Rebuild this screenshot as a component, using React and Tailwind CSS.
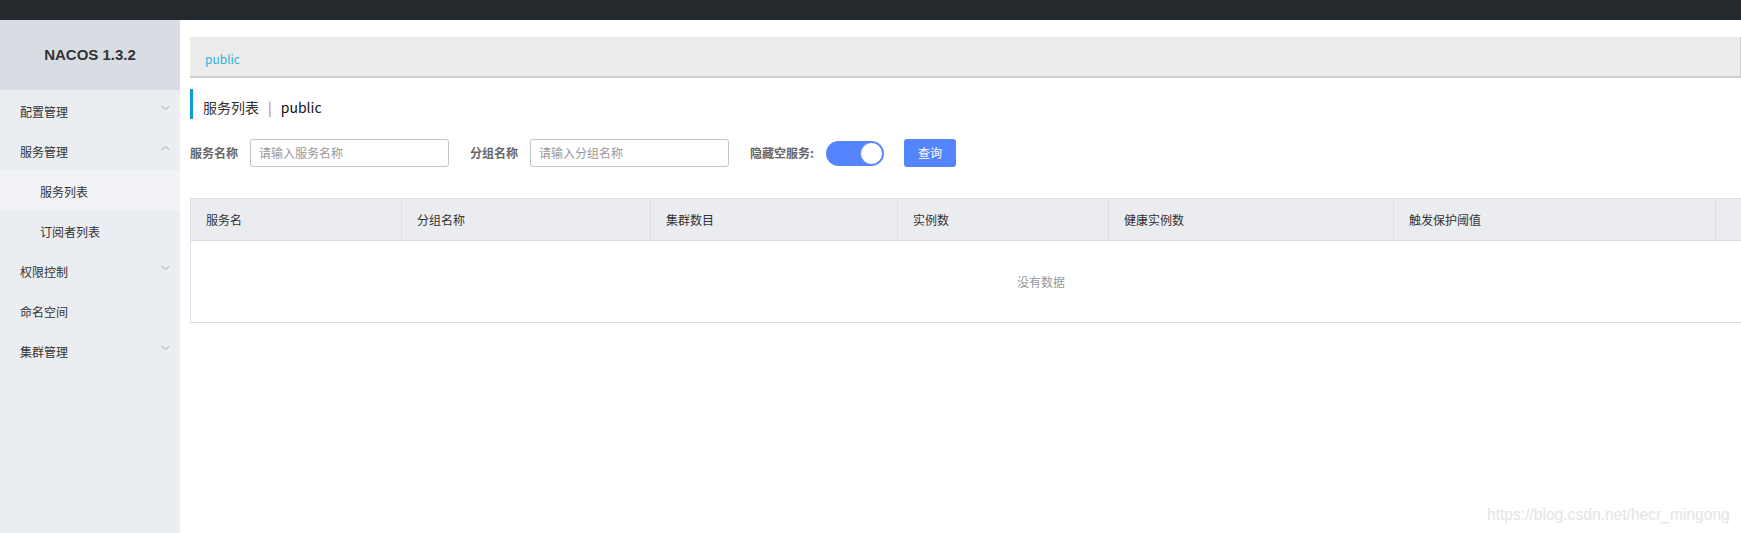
import React from 'react';

const cjk = { fontFamily: '"Noto Sans CJK SC", "Liberation Sans", sans-serif' };

// sidebar menu
const menu = [
  { label: '配置管理', arrow: 'down' },
  { label: '服务管理', arrow: 'up' },
  { label: '服务列表', sub: true, active: true },
  { label: '订阅者列表', sub: true },
  { label: '权限控制', arrow: 'down' },
  { label: '命名空间' },
  { label: '集群管理', arrow: 'down' },
];

const columns = [
  { title: '服务名', w: 'w-[211px]' },
  { title: '分组名称', w: 'w-[249px]' },
  { title: '集群数目', w: 'w-[247px]' },
  { title: '实例数', w: 'w-[211px]' },
  { title: '健康实例数', w: 'w-[285px]' },
  { title: '触发保护阈值', w: 'w-[322px]' },
  { title: '操作', w: 'w-[177px]' },
];

const Chevron = ({ dir }) => (
  <svg width="9" height="6" viewBox="0 0 9 6" className="text-[#a3a7b0]">
    {dir === 'down' ? (
      <path d="M0.5 0.8 L4.5 4.8 L8.5 0.8" fill="none" stroke="currentColor" strokeWidth="1" />
    ) : (
      <path d="M0.5 5.2 L4.5 1.2 L8.5 5.2" fill="none" stroke="currentColor" strokeWidth="1" />
    )}
  </svg>
);

const Sidebar = () => (
  <div className="w-[180px] shrink-0 bg-[#eaedf1] flex flex-col">
    <div className="h-[70px] bg-[#d8dde4] flex items-center justify-center">
      <span className="text-[15px] font-bold text-[#333]" style={{ fontFamily: '"Liberation Sans", sans-serif' }}>
        NACOS 1.3.2
      </span>
    </div>
    {menu.map((m) => (
      <div
        key={m.label}
        className={`h-[40px] flex items-center justify-between pr-[10px] text-[12px] text-[#333] ${
          m.sub ? 'pl-[40px]' : 'pl-[20px]'
        } ${m.active ? 'bg-[#f2f3f7]' : ''}`}
      >
        <span className="pt-[4px]">{m.label}</span>
        {m.arrow && (
          <span className="-mt-[4px]">
            <Chevron dir={m.arrow} />
          </span>
        )}
      </div>
    ))}
  </div>
);

const SearchBar = () => (
  <div className="mt-[20px] flex items-center h-[28px] text-[12px]">
    <span className="font-bold text-[#666] mr-[12px]">服务名称</span>
    <div className="w-[199px] h-[28px] border border-[#c4c6cf] rounded-[3px] flex items-center px-[8px] text-[#999] mr-[21px]">
      请输入服务名称
    </div>
    <span className="font-bold text-[#666] mr-[12px]">分组名称</span>
    <div className="w-[199px] h-[28px] border border-[#c4c6cf] rounded-[3px] flex items-center px-[8px] text-[#999] mr-[21px]">
      请输入分组名称
    </div>
    <span className="font-bold text-[#666] mr-[12px]">隐藏空服务:</span>
    <div className="w-[58px] h-[25px] rounded-full bg-[#5584ff] flex items-center justify-end pr-[1px] mr-[20px]">
      <div className="w-[23px] h-[23px] rounded-full bg-white border border-[#5584ff]" />
    </div>
    <button className="w-[52px] h-[28px] rounded-[3px] bg-[#5584ff] text-white text-[12px]">查询</button>
  </div>
);

const Table = () => (
  <div className="mt-[31px] w-[1702px] border border-[#dcdee3]">
    <div className="flex h-[42px] bg-[#ebecf0] border-b border-[#dcdee3]">
      {columns.map((c, i) => (
        <div
          key={c.title}
          className={`${c.w} shrink-0 flex items-center pl-[15px] text-[12px] text-[#333] ${
            i < columns.length - 1 ? 'border-r border-[#dcdee3]' : ''
          }`}
        >
          {i < columns.length - 1 ? c.title : ''}
        </div>
      ))}
    </div>
    <div className="h-[81px] flex items-center justify-center text-[12px] text-[#999]">没有数据</div>
  </div>
);

export default function App() {
  return (
    <div className="relative w-[1741px] h-[533px] overflow-hidden bg-white flex flex-col" style={cjk}>
      <div className="h-[20px] shrink-0 bg-[#252a2f]" />
      <div className="flex flex-1 min-h-0">
        <Sidebar />
        <div className="flex-1 pl-[10px] pt-[17px] min-w-0">
          <div className="h-[41px] bg-[#ececec] border-b-2 border-r border-[#cfcfcf] flex items-center pl-[15px] pt-[4px]">
            <span className="text-[12px] text-[#2fb3d9]">public</span>
          </div>
          <div className="mt-[11px] h-[30px] border-l-[3px] border-[#0e9ad8] flex items-center pl-[10px] pt-[7px] text-[14px]">
            <span className="text-[#333]">服务列表</span>
            <span className="mx-[9px] text-[#c27a30]">|</span>
            <span className="text-[#111]">public</span>
          </div>
          <SearchBar />
          <Table />
        </div>
      </div>
      <div
        className="absolute left-[1487px] top-[503px] text-[15.6px] text-[#e4e4e4]"
        style={{ fontFamily: '"Liberation Sans", sans-serif' }}
      >
        https://blog.csdn.net/hecr_mingong
      </div>
    </div>
  );
}
